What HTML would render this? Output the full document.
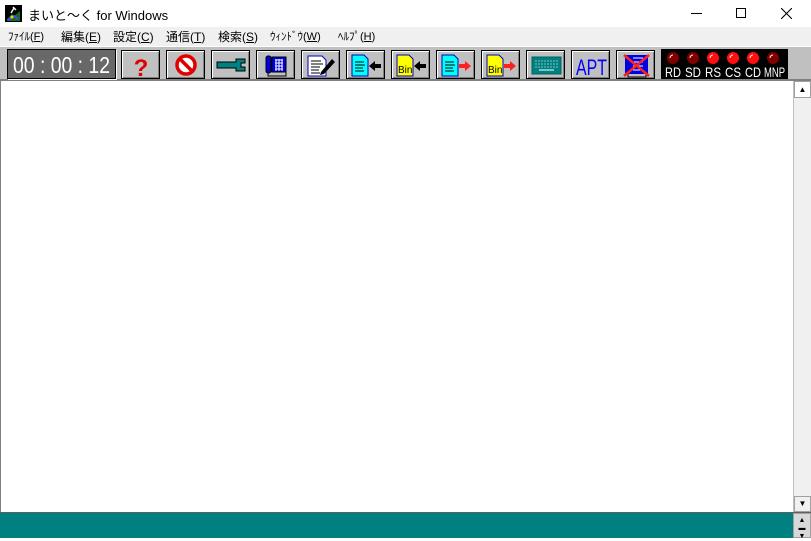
<!DOCTYPE html>
<html><head><meta charset="utf-8"><style>
*{margin:0;padding:0;box-sizing:border-box}
body{width:811px;height:538px;overflow:hidden;background:#fff;position:relative;font-family:"Liberation Sans","Noto Sans CJK JP",sans-serif}
.a{position:absolute}
.title{left:0;top:0;width:811px;height:27px;background:#fff}
.menu{left:0;top:27px;width:811px;height:19px;background:#f0f0f0;font-size:12px;color:#000}
.menu span{position:absolute;top:1px}
.tb{left:0;top:46px;width:811px;height:35px;background:#c0c0c0;border-top:1px solid #fff;border-bottom:2px solid #808080}
.btn{position:absolute;top:50px;width:39px;height:29px;background:#c0c0c0;border:1px solid #000;box-shadow:inset 1px 1px 0 #fff,inset -1px -1px 0 #808080}
.btn svg{position:absolute;left:0;top:0}
</style></head><body>
<div class="a title">
<svg class="a" style="left:5px;top:5px" width="17" height="17"><rect width="17" height="17" fill="#000"/><path d="M2 14 L7 9 L9 11 L15 6 L15 16 L2 16Z" fill="#1a6a20"/><path d="M3 15 L9 11 L13 14" stroke="#3050ff" stroke-width="2" fill="none"/><path d="M8 2 L11 5 M9 3 L6 8" stroke="#fff" stroke-width="1.4"/><circle cx="7" cy="12" r="1.5" fill="#ffd000"/></svg>
<div class="a" style="left:28px;top:5px;font-size:13px;color:#000">まいと〜く for Windows</div>
<div class="a" style="left:691px;top:13px;width:11px;height:1px;background:#000"></div>
<div class="a" style="left:736px;top:8px;width:10px;height:10px;border:1px solid #000"></div>
<svg class="a" style="left:781px;top:8px" width="11" height="11"><path d="M0 0L11 11M11 0L0 11" stroke="#000" stroke-width="1.1"/></svg>
</div>
<div class="a menu">
<span style="left:8px;font-size:11px">ﾌｧｲﾙ(<u>F</u>)</span>
<span style="left:61px">編集(<u>E</u>)</span>
<span style="left:113px">設定(<u>C</u>)</span>
<span style="left:166px">通信(<u>T</u>)</span>
<span style="left:218px">検索(<u>S</u>)</span>
<span style="left:270px;font-size:11px">ｳｨﾝﾄﾞｳ(<u>W</u>)</span>
<span style="left:338px;font-size:11px">ﾍﾙﾌﾟ(<u>H</u>)</span>
</div>
<div class="a tb"></div>
<div class="a" style="left:7px;top:49px;width:109px;height:30px;background:#686868;border:1px solid #000;box-shadow:1px 1px 0 #fff">
<svg width="107" height="28" class="a" style="left:0;top:0"><text x="5" y="23" font-size="23" fill="#fff" font-family="Liberation Sans" textLength="97" lengthAdjust="spacingAndGlyphs">00 : 00 : 12</text></svg></div>

<div class="btn" style="left:121px"><svg width="39" height="29"><text x="19" y="25" font-size="24" font-weight="bold" fill="#e00000" text-anchor="middle" font-family="Liberation Sans">?</text></svg></div>
<div class="btn" style="left:166px"><svg width="39" height="29"><circle cx="19" cy="14" r="9" fill="#fff" stroke="#e00000" stroke-width="3.5"/><path d="M13 8L25 20" stroke="#e00000" stroke-width="3.5"/></svg></div>
<div class="btn" style="left:211px"><svg width="39" height="29"><path d="M5 11H24V8H33V12H29V16H33V20H24V17H5Z" fill="#008080" stroke="#000"/></svg></div>
<div class="btn" style="left:256px"><svg width="39" height="29"><rect x="9" y="5" width="5" height="17" rx="2" fill="#0000e0" stroke="#000"/><rect x="15" y="6" width="14" height="15" fill="#0000e0" stroke="#000"/><path d="M18 9h8M18 12h8M18 15h8M18 18h8M19 8v12M22 8v12M25 8v12" stroke="#fff" stroke-width="1"/><path d="M11 22v3h18v-4" stroke="#000" fill="none"/></svg></div>
<div class="btn" style="left:301px"><svg width="39" height="29"><path d="M6 5H20L24 9V25H6Z" fill="#fff" stroke="#0000c0"/><path d="M9 10h10M9 13h12M9 16h9M9 19h8M9 22h9" stroke="#000"/><path d="M19 21L30 8L33 11L22 23L18 24Z" fill="#000"/></svg></div>
<div class="btn" style="left:346px"><svg width="39" height="29"><path d="M5 4H17L21 8V25H5Z" fill="#00ffff" stroke="#0000c0"/><path d="M8 11h9M8 14h10M8 17h8M8 20h9" stroke="#000"/><path d="M22 15L28 10V13H34V17H28V20Z" fill="#000"/></svg></div>
<div class="btn" style="left:391px"><svg width="39" height="29"><path d="M5 4H17L21 8V25H5Z" fill="#ffff00" stroke="#0000c0"/><text x="6" y="22" font-size="10" fill="#000" font-family="Liberation Sans">Bin</text><path d="M22 15L28 10V13H34V17H28V20Z" fill="#000"/></svg></div>
<div class="btn" style="left:436px"><svg width="39" height="29"><path d="M5 4H17L21 8V25H5Z" fill="#00ffff" stroke="#0000c0"/><path d="M8 11h9M8 14h10M8 17h8M8 20h9" stroke="#000"/><path d="M34 15L28 10V13H22V17H28V20Z" fill="#ff2020"/></svg></div>
<div class="btn" style="left:481px"><svg width="39" height="29"><path d="M5 4H17L21 8V25H5Z" fill="#ffff00" stroke="#0000c0"/><text x="6" y="22" font-size="10" fill="#000" font-family="Liberation Sans">Bin</text><path d="M34 15L28 10V13H22V17H28V20Z" fill="#ff2020"/></svg></div>
<div class="btn" style="left:526px"><svg width="39" height="29"><rect x="5" y="6" width="29" height="17" fill="#008080" stroke="#006060"/><path d="M8 10h23M8 13h23M8 16h23" stroke="#80c0c0" stroke-dasharray="2 1"/><rect x="12" y="18" width="15" height="2" fill="#80c0c0"/></svg></div>
<div class="btn" style="left:571px"><svg width="39" height="29"><text x="4" y="24" font-size="22" fill="#0000ff" font-family="Liberation Sans" textLength="31" lengthAdjust="spacingAndGlyphs">APT</text></svg></div>
<div class="btn" style="left:616px"><svg width="39" height="29"><rect x="8" y="4" width="23" height="19" fill="#0000e0"/><path d="M16 7h10M16 11h10M16 15h10M16 19h10" stroke="#fff"/><path d="M11 22v4h18v-4" stroke="#000" fill="none"/><path d="M7 4L32 25M32 4L7 25" stroke="#ff2020" stroke-width="2.5"/></svg></div>

<div class="a" style="left:661px;top:49px;width:127px;height:30px;background:#000">
<svg width="127" height="30">
<circle cx="12" cy="9" r="6" fill="#800000"/><circle cx="32" cy="9" r="6" fill="#800000"/><circle cx="52" cy="9" r="6" fill="#ff1010"/><circle cx="72" cy="9" r="6" fill="#ff1010"/><circle cx="92" cy="9" r="6" fill="#ff1010"/><circle cx="112" cy="9" r="6" fill="#800000"/>
<path d="M9 9a3 3 0 0 1 3-3M29 9a3 3 0 0 1 3-3M49 9a3 3 0 0 1 3-3M69 9a3 3 0 0 1 3-3M89 9a3 3 0 0 1 3-3M109 9a3 3 0 0 1 3-3" stroke="#fff" fill="none"/>
<g fill="#fff" font-size="14" font-family="Liberation Sans">
<text x="4" y="28" textLength="16" lengthAdjust="spacingAndGlyphs">RD</text><text x="24" y="28" textLength="16" lengthAdjust="spacingAndGlyphs">SD</text><text x="44" y="28" textLength="16" lengthAdjust="spacingAndGlyphs">RS</text><text x="64" y="28" textLength="16" lengthAdjust="spacingAndGlyphs">CS</text><text x="84" y="28" textLength="16" lengthAdjust="spacingAndGlyphs">CD</text><text x="103" y="28" textLength="21" lengthAdjust="spacingAndGlyphs">MNP</text>
</g></svg></div>

<div class="a" style="left:0;top:81px;width:1px;height:431px;background:#808080"></div>
<div class="a" style="left:793px;top:81px;width:18px;height:431px;background:#f0f0f0;border-left:1px solid #c0c0c0"></div>
<div class="a" style="left:794px;top:81px;width:17px;height:17px;background:#fff;border:1px solid #a0a0a0;font-size:8px;text-align:center;line-height:15px">▲</div>
<div class="a" style="left:794px;top:496px;width:17px;height:16px;background:#f0f0f0;border:1px solid #a0a0a0;font-size:8px;text-align:center;line-height:14px">▼</div>
<div class="a" style="left:0;top:512px;width:811px;height:26px;background:#008080;border-top:1px solid #606060"></div>
<div class="a" style="left:793px;top:513px;width:18px;height:25px;background:#d8d8d8;border:1px solid #a0a0a0;font-size:7px;text-align:center;line-height:8px;padding-top:3px">▲<br>▬<br>▼</div>
</body></html>
